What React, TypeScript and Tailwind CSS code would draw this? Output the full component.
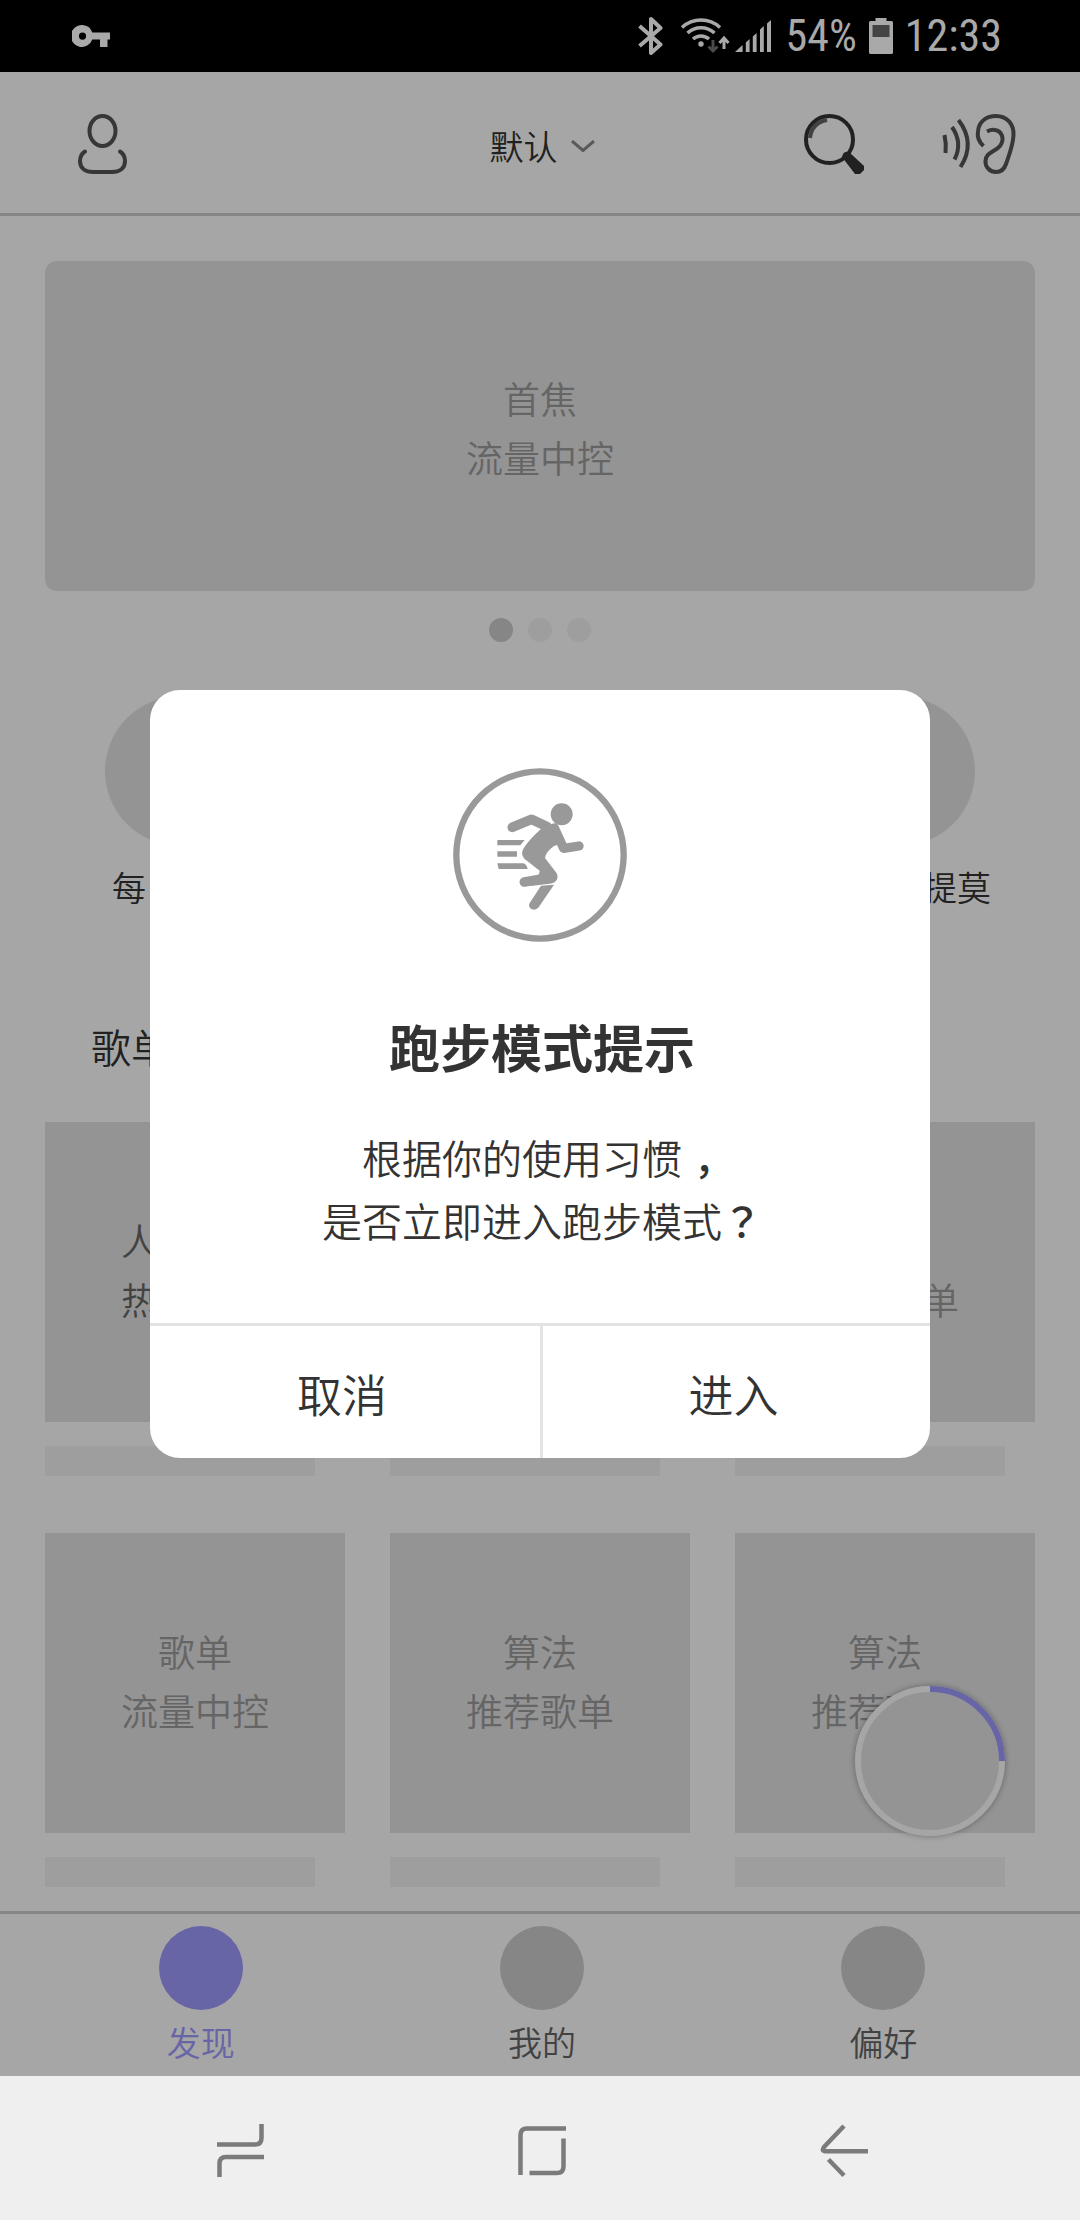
import { useState } from 'react';

const quickLinks = ['每日推荐', '歌单', '排行榜', '私人FM提莫'];

const playlists = [
  { lines: ['人气推荐', '热门歌单'], tone: 'text-[#666]' },
  { lines: ['歌单', '流量中控'], tone: 'text-[#9c9c9c]' },
  { lines: ['算法', '推荐歌单'], tone: 'text-[#9c9c9c]' },
  { lines: ['歌单', '流量中控'], tone: 'text-[#9c9c9c]' },
  { lines: ['算法', '推荐歌单'], tone: 'text-[#9c9c9c]' },
  { lines: ['算法', '推荐歌单'], tone: 'text-[#9c9c9c]' },
];

const tabs = ['发现', '我的', '偏好'];

function StatusBar() {
  return (
    <div className="flex h-[72px] items-center justify-between bg-black pl-[72px] pr-[78px] text-[#a9a9a9]">
      <svg width="38" height="22" viewBox="0 0 38 22" fill="currentColor">
        <path
          fillRule="evenodd"
          d="M10.500 0a11 11 0 1 0 9.800 14.500H28V22h7.500v-7.500H38V7.500H20.300A11 11 0 0 0 10.500 0Zm0 7.500a3.600 3.600 0 1 1 0 7.200a3.600 3.600 0 0 1 0-7.200Z"
        />
      </svg>
      <div className="flex items-center font-normal">
        {/* Bluetooth */}
        <svg className="mr-4" width="26" height="38" viewBox="0 0 26 38" fill="none" stroke="currentColor" strokeWidth="4" strokeLinejoin="round">
          <path d="M1.500 9l21 18.500L13 36V2l9.500 9L1.500 29" />
        </svg>
        {/* Wifi with traffic arrows */}
        <svg className="mr-[5px]" width="50" height="38" viewBox="0 0 50 38" fill="none" stroke="currentColor" strokeWidth="3.500">
          <path d="M2 10.500A28 28 0 0 1 40 10.500M7.500 16A20 20 0 0 1 34.500 16M13 22A12 12 0 0 1 29 22" />
          <circle cx="21" cy="27" r="2.700" fill="currentColor" stroke="none" />
          <path d="M33 23v11M28.500 29.500l4.500 4.500l4.500-4.500" stroke="#4a4a4a" strokeWidth="3" />
          <path d="M44 32V21M39.500 26l4.500-5l4.500 5" strokeWidth="3" />
        </svg>
        {/* Signal */}
        <svg className="mr-[15px]" width="36" height="32" viewBox="0 0 36 32" fill="currentColor">
          <path d="M0 32L7.600 25V32ZM10.800 22.500L14.600 19V32H10.800ZM17.800 16.500L21.600 13V32H17.800ZM25 9.500L28.800 6V32H25ZM32 3.500L36 0V32H32Z" />
        </svg>
        <span className="mr-3 font-['Roboto_Condensed','Liberation_Sans_Narrow',Roboto,sans-serif] text-[44px] leading-[72px]">54%</span>
        <svg className="mr-3" width="24" height="36" viewBox="0 0 24 36" fill="currentColor">
          <path d="M6.500 0H17.500V3H22.500Q24 3 24 4.500V34.500Q24 36 22.500 36H1.500Q0 36 0 34.500V4.500Q0 3 1.500 3H6.500Z" />
          <path d="M3.500 7H20.500V19H3.500Z" fill="#444" />
        </svg>
        <span className="font-['Roboto_Condensed','Liberation_Sans_Narrow',Roboto,sans-serif] text-[44px] leading-[72px]">12:33</span>
      </div>
    </div>
  );
}

function Header() {
  return (
    <header className="grid grid-cols-3 items-center border-b-[3px] border-[#cecece] pb-[39px] pt-[42px] text-[#333]">
      <div className="flex pl-[78px]">
        <button aria-label="个人中心">
          <svg width="49" height="60" viewBox="0 0 49 60" fill="none" stroke="#555" strokeWidth="4" strokeLinecap="round">
            <ellipse cx="24.500" cy="17" rx="13" ry="15" />
            <path d="M7 37.500C3 40 2 44 2 47C2 55 8 58 15 58H34C41 58 47 55 47 47C47 43 46 40 42 37.500" />
          </svg>
        </button>
      </div>
      <button className="flex items-center justify-center gap-[13px] pl-1 pt-1 text-[34px] leading-[56px]">
        默认
        <svg width="24" height="12" viewBox="0 0 24 12" fill="none" stroke="#8a8a8a" strokeWidth="3">
          <path d="M1 1L12 10.500L23 1" />
        </svg>
      </button>
      <div className="flex justify-end gap-[78px] pr-[64px]">
        <button aria-label="搜索">
          <svg width="60" height="60" viewBox="0 0 60 60" fill="none" stroke="currentColor">
            <circle cx="25.500" cy="25.500" r="23.500" strokeWidth="4" />
            <path d="M6 24C7 14 13 8 23 6" stroke="#666" strokeWidth="4" />
            <path d="M38 43Q39 37 45 38L60 52V56L56 60H51Z" fill="currentColor" stroke="none" />
          </svg>
        </button>
        <button aria-label="听歌识曲">
          <svg width="74" height="60" viewBox="0 0 74 60" fill="none" stroke="#555" strokeWidth="4">
            <path d="M2.500 21Q4.500 30 3.500 39M10 13Q21 29 12.500 45.500M16.500 6Q34 29 18.500 53" />
            <path d="M41.500 32C37 28 35 23 36 17C37 7 45 2 54 2C65 2 72 10 71.500 21C71 32 67 41 64 50C62 56 58 58 54 58C48 58 43 53 43.500 47C44 38 53 38 58 32C63 25 60 17 53 16C50 15.500 48 16 45 17.500" />
          </svg>
        </button>
      </div>
    </header>
  );
}

function TabBar() {
  const [active, setActive] = useState(0);

  return (
    <nav className="grid grid-cols-3 border-t-[3px] border-[#cecece] pb-[10px] pl-[30px] pr-[26px] pt-3">
      {tabs.map((tab, i) => (
        <button key={tab} onClick={() => setActive(i)} className="flex flex-col items-center gap-2">
          <span className={`size-[84px] rounded-full ${i === active ? 'bg-[#9f9bff]' : 'bg-[#cecece]'}`} />
          <span className={`text-[34px] leading-[48px] ${i === active ? 'text-[#9f9bff]' : 'text-[#666]'}`}>{tab}</span>
        </button>
      ))}
    </nav>
  );
}

function ProgressRing() {
  return (
    <div className="absolute bottom-[240px] right-[75px] rounded-full bg-[#e4e4e4] shadow-[0_0_6px_rgba(0,0,0,0.35)]">
      <svg width="150" height="150" viewBox="0 0 150 150" fill="none" strokeWidth="6">
        <circle cx="75" cy="75" r="72" stroke="#fff" />
        <path d="M75 3A72 72 0 0 1 147 75" stroke="#9f9bff" />
      </svg>
    </div>
  );
}

function RunnerIcon() {
  return (
    <svg className="mx-auto" width="174" height="174" viewBox="0 0 522 522" fill="none" stroke="#999">
      <circle cx="261" cy="261" r="251" strokeWidth="19" />
      <circle cx="326" cy="139" r="33" fill="#999" stroke="none" />
      <path d="M178 178L236 154L282 176" strokeWidth="29" strokeLinecap="round" strokeLinejoin="round" />
      <path d="M304 180L332 241L378 234" strokeWidth="28" strokeLinecap="round" strokeLinejoin="round" />
      <path
        d="M264 168L302 170Q316 182 323 202L330 226L303 234Q278 252 276 270L310 314Q317 325 311 336Q306 345 290 347L232 354L258 318L260 308L214 272Q202 258 211 242Q226 218 263 184Z"
        fill="#999"
        stroke="none"
      />
      <path d="M214 342L296 328" strokeWidth="29" strokeLinecap="round" />
      <path d="M264 353L303 350L257 418Q249 428 237 424Q224 418 230 405Z" fill="#999" stroke="none" />
      <path d="M133 216H215L202 232H133ZM133 250H192V266H133ZM133 286H211Q222 290 224 303H137Z" fill="#999" stroke="none" />
    </svg>
  );
}

function RunningDialog({ onClose }: { onClose: () => void }) {
  return (
    <div className="absolute inset-0 flex items-center justify-center bg-black/35 px-[150px]">
      <div role="dialog" aria-labelledby="dialog-title" className="w-full overflow-hidden rounded-[30px] bg-white text-center text-[#333]">
        <div className="pb-[71px] pt-[78px]">
          <RunnerIcon />
          <div className="pl-1 pt-[67px]">
            <h2 id="dialog-title" className="text-[51px] font-bold leading-[75px]">跑步模式提示</h2>
            {/* Full-width punctuation sits in the middle of its cell */}
            <div className="mt-[42px] text-[40px] leading-[63px]">
              <p>根据你的使用习惯<span className="-mr-3 pl-3 font-medium">，</span></p>
              <p>是否立即进入跑步模式<span lang="zh-TW" className="font-medium">？</span></p>
            </div>
          </div>
        </div>
        <div className="grid grid-cols-2 border-t-[3px] border-[#e3e3e3] text-[45px] leading-[128px]">
          <button onClick={onClose} className="pr-1.5 pt-1">取消</button>
          <button onClick={onClose} className="border-l-[3px] border-[#e3e3e3] pr-1.5 pt-1">进入</button>
        </div>
      </div>
    </div>
  );
}

function SystemNav() {
  return (
    <div className="grid h-36 grid-cols-3 items-center justify-items-center bg-[#efefef] pl-[90px] pr-[84px] pt-1.5 text-[#7b7b7b]">
      <button aria-label="最近任务">
        <svg width="50" height="54" viewBox="0 0 50 54" fill="none" stroke="currentColor" strokeWidth="4.500">
          <path d="M1 20.500H39Q45.500 20.500 45.500 14V0M48 33H10Q3.500 33 3.500 39.500V53" />
        </svg>
      </button>
      <button aria-label="主屏幕">
        <svg width="50" height="54" viewBox="0 0 50 54" fill="none" stroke="currentColor" strokeWidth="4.500">
          <path d="M2.500 51V11Q2.500 4.500 9 4.500H48M11.500 49H39Q45.500 49 45.500 42.500V14.500" />
        </svg>
      </button>
      <button aria-label="返回">
        <svg width="50" height="54" viewBox="0 0 50 54" fill="none" stroke="currentColor" strokeWidth="4.500">
          <path d="M24 2L4.500 22.500C1.500 26 3 27.200 5.500 27.200H48M8.500 35.500L24 51.500" />
        </svg>
      </button>
    </div>
  );
}

export default function App() {
  const [dialogOpen, setDialogOpen] = useState(true);

  return (
    <div className="font-['Noto_Sans_CJK_SC',sans-serif] font-[350]" lang="zh-CN">
      <StatusBar />

      <div className="relative bg-white">
        <Header />

        <main className="px-[45px] pb-6 pt-[45px]">
          {/* Banner */}
          <div className="flex h-[330px] flex-col items-center justify-center rounded-xl bg-[#e4e4e4] pt-1 text-[37px] leading-[59px] text-[#9c9c9c]">
            <span>首焦</span>
            <span>流量中控</span>
          </div>
          <div className="mt-[27px] flex justify-center gap-[15px]">
            <span className="size-6 rounded-full bg-[#cecece]" />
            <span className="size-6 rounded-full bg-[#f3f3f3]" />
            <span className="size-6 rounded-full bg-[#f3f3f3]" />
          </div>

          {/* Quick links */}
          <div className="mt-[54px] grid grid-cols-4 px-[15px]">
            {quickLinks.map((label) => (
              <a key={label} href="#" className="flex flex-col items-center gap-[17px] text-[34px] leading-[48px] text-[#333]">
                <span className="size-[150px] rounded-full bg-[#e4e4e4]" />
                {label}
              </a>
            ))}
          </div>

          {/* Playlists */}
          <h2 className="mt-[105px] pl-[46px] text-[40px] leading-[60px] text-[#333]">歌单推荐</h2>
          <div className="mt-[46px] grid grid-cols-3 gap-x-[45px] gap-y-[57px]">
            {playlists.map((item, i) => (
              <div key={i}>
                <div className={`flex aspect-square flex-col items-center justify-center bg-[#e4e4e4] pb-1 text-[37px] leading-[59px] ${item.tone}`}>
                  {item.lines.map((line) => (
                    <span key={line}>{line}</span>
                  ))}
                </div>
                <div className="mt-6 h-[30px] w-9/10 bg-[#f3f3f3]" />
              </div>
            ))}
          </div>
        </main>

        <TabBar />
        <ProgressRing />
        {dialogOpen && <RunningDialog onClose={() => setDialogOpen(false)} />}
      </div>

      <SystemNav />
    </div>
  );
}
